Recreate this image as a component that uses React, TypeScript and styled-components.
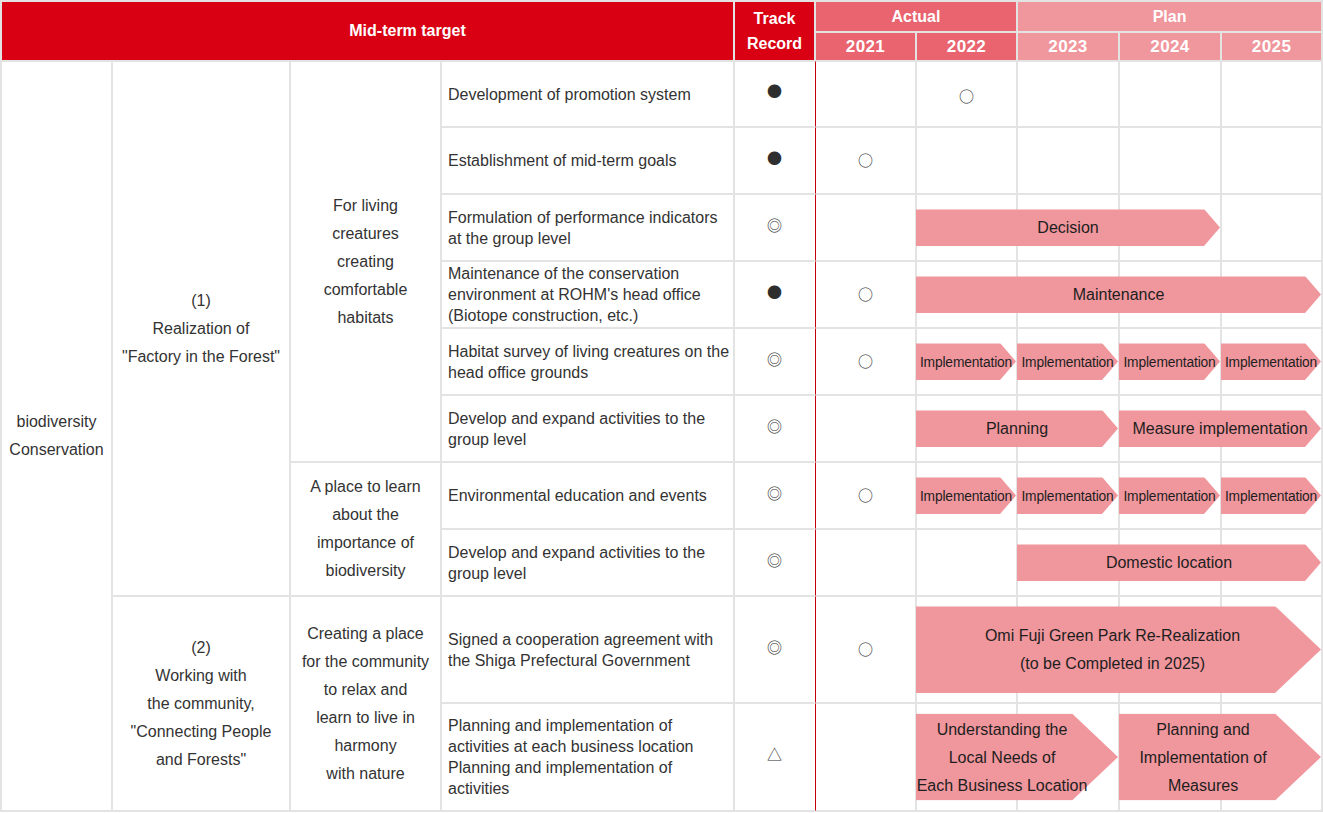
import React from "react";
import styled, { createGlobalStyle, css } from "styled-components";

const GlobalStyle = createGlobalStyle`
  html, body { margin: 0; padding: 0; background: #ffffff; }
  body { font-family: "Liberation Sans", Arial, Helvetica, sans-serif; color: #333333; }
`;

const COLS = [111, 178, 151, 293, 81, 101, 101, 102, 102, 101];
const YEAR_COLS = COLS.slice(5);
const RED = "#d80012";
const ACTUAL = "#e9646f";
const PLAN = "#f0969d";
const GRID = "#e3e3e3";

const Table = styled.table`
  border-collapse: separate;
  border-spacing: 0;
  table-layout: fixed;
  width: 1323px;
  border: 1px solid ${GRID};
  font-size: 16px;
`;

const HeadRow = styled.tr<{ $h: number }>`
  height: ${(p) => p.$h}px;
`;

const BodyRow = styled.tr<{ $h: number }>`
  height: ${(p) => p.$h}px;
`;

const HeadCell = styled.th<{ $bg: string; $lh?: number; $padLeft?: number }>`
  background: ${(p) => p.$bg};
  color: #ffffff;
  font-weight: bold;
  font-size: 16px;
  line-height: ${(p) => p.$lh ?? 20}px;
  text-align: center;
  vertical-align: middle;
  border: 1px solid ${GRID};
  padding: 0 0 0 ${(p) => p.$padLeft ?? 0}px;
`;

const YearHead = styled(HeadCell)`
  font-size: 17px;
  letter-spacing: 0.4px;
  padding-top: 1px;
`;

const NameCell = styled.td`
  border: 1px solid ${GRID};
  text-align: center;
  vertical-align: middle;
  line-height: 28px;
  padding: 0 2px;
  color: #333333;
`;

const TaskCell = styled.td`
  border: 1px solid ${GRID};
  vertical-align: middle;
  line-height: 21px;
  padding: 0 4px 0 6px;
  color: #333333;
`;

const MarkCell = styled.td`
  border: 1px solid ${GRID};
  border-right-color: #ffffff;
  text-align: center;
  vertical-align: middle;
  padding: 0;
`;

const YearCell = styled.td<{ $first?: boolean }>`
  border: 1px solid ${GRID};
  ${(p) =>
    p.$first &&
    css`
      border-left-color: #c2000e;
    `}
  text-align: center;
  vertical-align: middle;
  padding: 0;
  position: relative;
`;

const Mark = styled.span<{ $dy?: number }>`
  display: inline-block;
  font-family: "Noto Sans CJK JP", "DejaVu Sans", sans-serif;
  font-size: 15px;
  line-height: 15px;
  color: #2e2e2e;
  position: relative;
  top: ${(p) => p.$dy ?? 0}px;
`;

type Kind = "impl" | "normal" | "big";

const Arrow = styled.div<{ $kind: Kind }>`
  position: absolute;
  left: -1px;
  top: 50%;
  z-index: 1;
  transform: translateY(-50%);
  color: #1e1e1e;
  display: flex;
  align-items: center;
  justify-content: center;
  text-align: center;
  box-sizing: border-box;
  isolation: isolate;
  &::before {
    content: "";
    position: absolute;
    inset: 0;
    z-index: -1;
    background: ${PLAN};
    clip-path: ${(p) =>
      p.$kind === "big"
        ? "polygon(0 0, calc(100% - 46px) 0, 100% 50%, calc(100% - 46px) 100%, 0 100%)"
        : "polygon(0 0, calc(100% - 16px) 0, 100% 50%, calc(100% - 16px) 100%, 0 100%)"};
  }
  ${(p) =>
    p.$kind === "big"
      ? css`
          height: 87px;
          font-size: 16px;
          line-height: 28px;
        `
      : p.$kind === "impl"
      ? css`
          height: 37px;
          font-size: 13.8px;
          white-space: nowrap;
          letter-spacing: -0.15px;
        `
      : css`
          height: 37px;
          font-size: 16px;
          white-space: nowrap;
        `}
`;

const NoWrap = styled.span`
  white-space: nowrap;
`;

type Bar = { start: number; span: number; kind: Kind; label: React.ReactNode; pad?: number };

type Row = {
  h: number;
  lead?: React.ReactNode;
  task: React.ReactNode;
  track: string;
  y2021?: boolean;
  y2022?: boolean;
  bars?: Bar[];
};

const impl4: Bar[] = [0, 1, 2, 3].map((i) => ({
  start: i + 1,
  span: 1,
  kind: "impl" as Kind,
  label: "Implementation",
}));

const rows: Row[] = [
  {
    h: 66,
    lead: (
      <>
        <NameCell rowSpan={10}>
          biodiversity
          <br />
          Conservation
        </NameCell>
        <NameCell rowSpan={8}>
          (1)
          <br />
          Realization of
          <br />
          "Factory in the Forest"
        </NameCell>
        <NameCell rowSpan={6}>
          For living
          <br />
          creatures
          <br />
          creating
          <br />
          comfortable
          <br />
          habitats
        </NameCell>
      </>
    ),
    task: "Development of promotion system",
    track: "●",
    y2022: true,
  },
  { h: 67, task: "Establishment of mid-term goals", track: "●", y2021: true },
  {
    h: 67,
    task: (
      <>
        Formulation of performance indicators
        <br />
        at the group level
      </>
    ),
    track: "◎",
    bars: [{ start: 1, span: 3, kind: "normal", label: "Decision" }],
  },
  {
    h: 67,
    task: (
      <>
        Maintenance of the conservation
        <br />
        environment at ROHM's head office
        <br />
        (Biotope construction, etc.)
      </>
    ),
    track: "●",
    y2021: true,
    bars: [{ start: 1, span: 4, kind: "normal", label: "Maintenance" }],
  },
  {
    h: 67,
    task: (
      <>
        Habitat survey of living creatures on the
        <br />
        head office grounds
      </>
    ),
    track: "◎",
    y2021: true,
    bars: impl4,
  },
  {
    h: 67,
    task: (
      <>
        Develop and expand activities to the
        <br />
        group level
      </>
    ),
    track: "◎",
    bars: [
      { start: 1, span: 2, kind: "normal", label: "Planning" },
      { start: 3, span: 2, kind: "normal", label: "Measure implementation" },
    ],
  },
  {
    h: 67,
    lead: (
      <NameCell rowSpan={2}>
        A place to learn
        <br />
        about the
        <br />
        importance of
        <br />
        biodiversity
      </NameCell>
    ),
    task: "Environmental education and events",
    track: "◎",
    y2021: true,
    bars: impl4,
  },
  {
    h: 67,
    task: (
      <>
        Develop and expand activities to the
        <br />
        group level
      </>
    ),
    track: "◎",
    bars: [{ start: 2, span: 3, kind: "normal", label: "Domestic location" }],
  },
  {
    h: 107,
    lead: (
      <>
        <NameCell rowSpan={2}>
          (2)
          <br />
          Working with
          <br />
          the community,
          <br />
          "Connecting People
          <br />
          and Forests"
        </NameCell>
        <NameCell rowSpan={2}>
          Creating a place
          <br />
          for the community
          <br />
          to relax and
          <br />
          learn to live in
          <br />
          harmony
          <br />
          with nature
        </NameCell>
      </>
    ),
    task: (
      <>
        Signed a cooperation agreement with
        <br />
        the Shiga Prefectural Government
      </>
    ),
    track: "◎",
    y2021: true,
    bars: [
      {
        start: 1,
        span: 4,
        kind: "big",
        pad: 12,
        label: (
          <>
            Omi Fuji Green Park Re-Realization
            <br />
            (to be Completed in 2025)
          </>
        ),
      },
    ],
  },
  {
    h: 108,
    task: (
      <>
        Planning and implementation of
        <br />
        activities at each business location
        <br />
        Planning and implementation of
        <br />
        activities
      </>
    ),
    track: "△",
    bars: [
      {
        start: 1,
        span: 2,
        kind: "big",
        pad: 30,
        label: (
          <>
            Understanding the
            <br />
            Local Needs of
            <br />
            <NoWrap>Each Business Location</NoWrap>
          </>
        ),
      },
      {
        start: 3,
        span: 2,
        kind: "big",
        pad: 34,
        label: (
          <>
            Planning and
            <br />
            Implementation of
            <br />
            Measures
          </>
        ),
      },
    ],
  },
];

const YEARS = ["2021", "2022", "2023", "2024", "2025"];

function spanWidth(start: number, span: number) {
  let w = 0;
  for (let i = start; i < start + span; i++) w += YEAR_COLS[i];
  return w - 1;
}

function YearCells({ row }: { row: Row }) {
  return (
    <>
      {YEARS.map((y, i) => {
        const bar = row.bars?.find((b) => b.start === i);
        const circle = (i === 0 && row.y2021) || (i === 1 && row.y2022);
        return (
          <YearCell key={y} $first={i === 0}>
            {circle && <Mark $dy={i === 1 ? 3 : 0}>○</Mark>}
            {bar && (
              <Arrow
                $kind={bar.kind}
                style={{ width: spanWidth(bar.start, bar.span), paddingRight: bar.pad ?? 0 }}
              >
                <span>{bar.label}</span>
              </Arrow>
            )}
          </YearCell>
        );
      })}
    </>
  );
}

export default function App() {
  return (
    <>
      <GlobalStyle />
      <Table>
        <colgroup>
          {COLS.map((w, i) => (
            <col key={i} style={{ width: w }} />
          ))}
        </colgroup>
        <thead>
          <HeadRow $h={31}>
            <HeadCell $bg={RED} colSpan={4} rowSpan={2} $padLeft={80}>
              Mid-term target
            </HeadCell>
            <HeadCell $bg={RED} rowSpan={2} $lh={25}>
              Track
              <br />
              Record
            </HeadCell>
            <HeadCell $bg={ACTUAL} colSpan={2}>
              Actual
            </HeadCell>
            <HeadCell $bg={PLAN} colSpan={3}>
              Plan
            </HeadCell>
          </HeadRow>
          <HeadRow $h={29}>
            {YEARS.map((y, i) => (
              <YearHead key={y} $bg={i < 2 ? ACTUAL : PLAN}>
                {y}
              </YearHead>
            ))}
          </HeadRow>
        </thead>
        <tbody>
          {rows.map((r, idx) => (
            <BodyRow key={idx} $h={r.h}>
              {r.lead}
              <TaskCell>{r.task}</TaskCell>
              <MarkCell>
                <Mark $dy={-2}>{r.track}</Mark>
              </MarkCell>
              <YearCells row={r} />
            </BodyRow>
          ))}
        </tbody>
      </Table>
    </>
  );
}
